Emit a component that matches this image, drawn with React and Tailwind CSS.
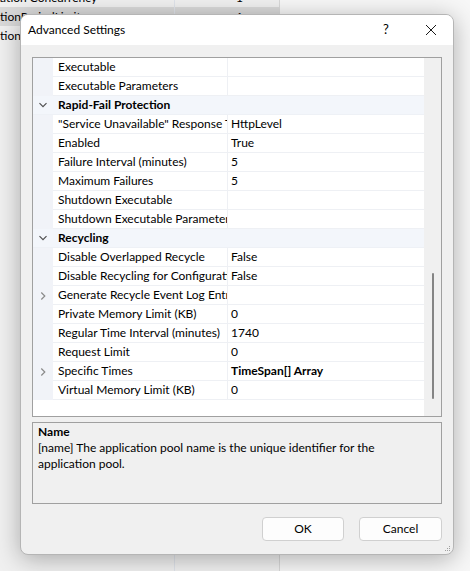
import React from 'react';

const rows = [
  { name: 'Executable', value: '' },
  { name: 'Executable Parameters', value: '' },
  { cat: 'Rapid-Fail Protection' },
  { name: '"Service Unavailable" Response Type', value: 'HttpLevel' },
  { name: 'Enabled', value: 'True' },
  { name: 'Failure Interval (minutes)', value: '5' },
  { name: 'Maximum Failures', value: '5' },
  { name: 'Shutdown Executable', value: '' },
  { name: 'Shutdown Executable Parameters', value: '' },
  { cat: 'Recycling' },
  { name: 'Disable Overlapped Recycle', value: 'False' },
  { name: 'Disable Recycling for Configuration Changes', value: 'False' },
  { name: 'Generate Recycle Event Log Entry', value: '', expand: true },
  { name: 'Private Memory Limit (KB)', value: '0' },
  { name: 'Regular Time Interval (minutes)', value: '1740' },
  { name: 'Request Limit', value: '0' },
  { name: 'Specific Times', value: 'TimeSpan[] Array', expand: true, bold: true },
  { name: 'Virtual Memory Limit (KB)', value: '0' },
];

const ChevronDown = () => (
  <svg width="10" height="10" viewBox="0 0 10 10" fill="none">
    <path d="M1.5 3.2 L5 6.7 L8.5 3.2" stroke="#505050" strokeWidth="1.2" />
  </svg>
);

const ChevronRight = () => (
  <svg width="10" height="10" viewBox="0 0 10 10" fill="none">
    <path d="M3.3 1.5 L6.8 5 L3.3 8.5" stroke="#8a8a8a" strokeWidth="1.2" />
  </svg>
);

const GridRow = ({ row }) => {
  if (row.cat) {
    return (
      <div className="flex h-[19px] bg-[#f3f6fb] border-b border-[#eef1f6]">
        <div className="w-[20px] flex items-center justify-center">
          <ChevronDown />
        </div>
        <div className="pl-[5px] font-bold leading-[18px]">{row.cat}</div>
      </div>
    );
  }
  return (
    <div className="flex h-[19px]">
      <div className="w-[20px] shrink-0 bg-[#f1f3f8] flex items-center justify-center">
        {row.expand && <ChevronRight />}
      </div>
      <div className="w-[175px] shrink-0 pl-[5px] overflow-hidden whitespace-nowrap border-b border-r border-[#eef0f4] bg-white leading-[18px]">
        {row.name}
      </div>
      <div
        className={
          'flex-1 pl-[3px] overflow-hidden whitespace-nowrap border-b border-[#eef0f4] bg-white leading-[18px] ' +
          (row.bold ? 'font-bold' : '')
        }
      >
        {row.value}
      </div>
    </div>
  );
};

export default function App() {
  return (
    <div
      className="relative w-[470px] h-[571px] overflow-hidden bg-[#f7f7f7] text-[12px] text-black"
      style={{ fontFamily: 'Lato, "Noto Sans", sans-serif' }}
    >
      {/* background window behind the dialog */}
      <div className="absolute left-0 top-[-12px] w-[280px] h-[600px] bg-[#f0f0f0] border-r border-[#d8d8d8]">
        <div className="flex h-[19px] leading-[19px]">
          <div className="w-[175px] whitespace-nowrap overflow-hidden border-r border-[#dfe3ea]">ation Concurrency</div>
          <div className="pl-[61px]">1</div>
        </div>
        <div className="flex h-[19px] bg-[#d9d9d9] leading-[19px]">
          <div className="w-[175px] whitespace-nowrap overflow-hidden border-r border-[#dfe3ea]">tionPeriodLimit</div>
          <div className="pl-[61px]">1</div>
        </div>
        <div className="flex h-[19px] leading-[19px]">
          <div className="w-[175px] whitespace-nowrap overflow-hidden border-r border-[#dfe3ea]">tion</div>
        </div>
        <div className="flex h-[540px]">
          <div className="w-[175px] border-r border-[#dfe3ea]" />
        </div>
      </div>

      {/* dialog */}
      <div className="absolute left-[20px] top-[14px] w-[434px] h-[541px] rounded-lg border border-[#b5b5b5] bg-[#f0f0f0] shadow-[0_4px_24px_rgba(0,0,0,0.3)] overflow-hidden flex flex-col">
        <div className="h-[30px] bg-white flex items-center shrink-0">
          <div className="pl-[7px] flex-1">Advanced Settings</div>
          <div className="w-[20px] text-center text-[13px] mr-[25px]">?</div>
          <div className="w-[20px] flex justify-center mr-[12px]">
            <svg width="12" height="12" viewBox="0 0 12 12">
              <path d="M1 1 L11 11 M11 1 L1 11" stroke="#1a1a1a" strokeWidth="1" />
            </svg>
          </div>
        </div>

        <div className="flex-1 flex flex-col px-[11px] pt-[12px]">
          {/* property grid */}
          <div className="h-[360px] border border-[#a0a0a0] bg-white flex">
            <div className="w-[391px] flex flex-col">
              {rows.map((r, i) => (
                <GridRow key={i} row={r} />
              ))}
            </div>
            <div className="flex-1 bg-[#f0f0f0] relative">
              <div className="absolute left-[8px] top-[215px] w-[2px] h-[126px] rounded-full bg-[#858585]" />
            </div>
          </div>

          {/* description */}
          <div className="mt-[5px] h-[82px] border border-[#a0a0a0] px-[5px] pt-[1px] leading-[16px]">
            <div className="font-bold">Name</div>
            <div>
              [name] The application pool name is the unique identifier for the
              <br />
              application pool.
            </div>
          </div>

          {/* buttons */}
          <div className="flex justify-end gap-[15px] mt-[13px]">
            <button className="w-[82px] h-[24px] rounded-[4px] border border-[#d0d0d0] bg-[#fdfdfd]">OK</button>
            <button className="w-[83px] h-[24px] rounded-[4px] border border-[#d0d0d0] bg-[#fdfdfd]">Cancel</button>
          </div>
        </div>

        {/* resize grip */}
        <div className="absolute right-[3px] bottom-[3px] grid grid-cols-3 gap-[1px]">
          <span className="w-[1px] h-[1px]" />
          <span className="w-[1px] h-[1px]" />
          <span className="w-[1px] h-[1px] bg-[#a0a0a0]" />
          <span className="w-[1px] h-[1px]" />
          <span className="w-[1px] h-[1px] bg-[#a0a0a0]" />
          <span className="w-[1px] h-[1px] bg-[#a0a0a0]" />
          <span className="w-[1px] h-[1px] bg-[#a0a0a0]" />
          <span className="w-[1px] h-[1px] bg-[#a0a0a0]" />
          <span className="w-[1px] h-[1px] bg-[#a0a0a0]" />
        </div>
      </div>
    </div>
  );
}
